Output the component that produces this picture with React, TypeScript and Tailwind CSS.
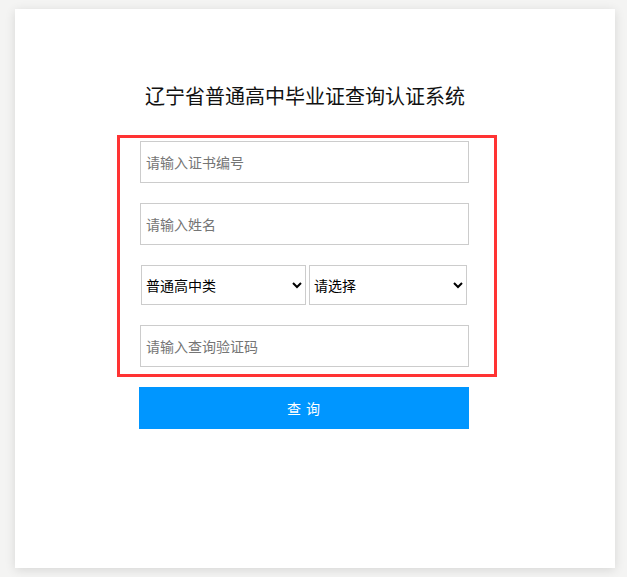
import React from 'react';

const font = { fontFamily: '"Microsoft YaHei", "Noto Sans CJK SC", sans-serif' };

export default function App() {
  return (
    <div className="w-[627px] h-[577px] bg-[#f4f4f3] pt-[9px] pl-[15px]" style={font}>
      <div className="w-[600px] h-[559px] bg-white shadow-[0_2px_10px_rgba(0,0,0,0.12)] flex flex-col">
        <h1 className="mt-[74px] ml-[125px] w-[330px] text-center text-[20px] leading-[26px] text-[#111]">
          辽宁省普通高中毕业证查询认证系统
        </h1>
        <form
          className="mt-[26px] ml-[102px] w-[380px] h-[242px] border-[3px] border-[#ff3333] pt-[3px] pl-[20px] flex flex-col gap-[20px]"
          onSubmit={(e) => e.preventDefault()}
        >
          <input
            className="w-[329px] h-[42px] border border-[#ccc] px-[5px] text-[14px] placeholder:text-[#757575] outline-none"
            placeholder="请输入证书编号"
          />
          <input
            className="w-[329px] h-[42px] border border-[#ccc] px-[5px] text-[14px] placeholder:text-[#757575] outline-none"
            placeholder="请输入姓名"
          />
          <div className="flex gap-[3px] pl-px">
            <select className="w-[165px] h-[40px] border border-[#ccc] bg-white text-[14px] text-black pl-0">
              <option>普通高中类</option>
            </select>
            <select className="w-[158px] h-[40px] border border-[#ccc] bg-white text-[14px] text-black pl-0">
              <option>请选择</option>
            </select>
          </div>
          <input
            className="w-[329px] h-[42px] border border-[#ccc] px-[5px] text-[14px] placeholder:text-[#757575] outline-none"
            placeholder="请输入查询验证码"
          />
        </form>
        <button className="mt-[10px] ml-[124px] w-[330px] h-[42px] bg-[#0096ff] text-white text-[14px] tracking-[1px]">
          查 询
        </button>
      </div>
    </div>
  );
}
